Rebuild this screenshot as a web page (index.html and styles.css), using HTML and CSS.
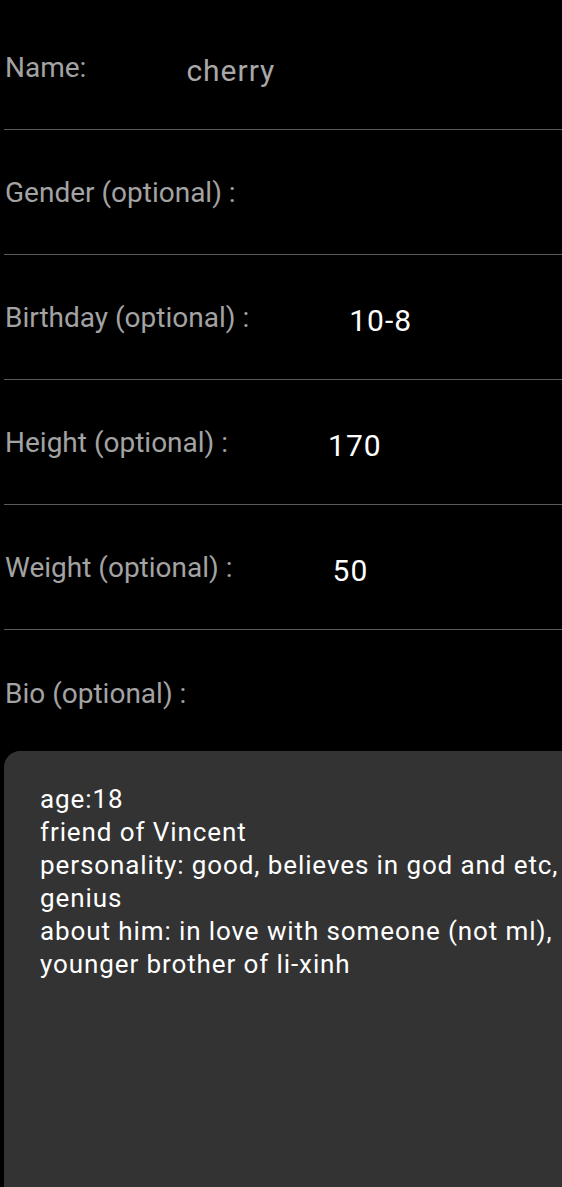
FILE: index.html
```html
<!DOCTYPE html>
<html>
<head>
<meta charset="utf-8">
<link rel="stylesheet" href="styles.css">
</head>
<body>
<div class="form">
  <div class="row"><span class="label">Name:</span><span class="value muted">cherry</span></div>
  <div class="row"><span class="label">Gender (optional) :</span></div>
  <div class="row"><span class="label">Birthday (optional) :</span><span class="value">10-8</span></div>
  <div class="row"><span class="label">Height (optional) :</span><span class="value">170</span></div>
  <div class="row"><span class="label">Weight (optional) :</span><span class="value">50</span></div>
  <div class="row bio-row"><span class="label">Bio (optional) :</span></div>
  <div class="bio">
    <p>age:18<br>friend of Vincent<br>personality: good, believes in god and etc, genius<br>about him: in love with someone (not ml), younger brother of li-xinh</p>
  </div>
</div>
</body>
</html>
```

FILE: styles.css
```css
html, body {
  margin: 0;
  padding: 0;
  background: #000;
  height: 100%;
  overflow: hidden;
}
body {
  font-family: Roboto, "Noto Sans", sans-serif;
}
.form {
  padding: 5px 0 0 4px;
  display: flex;
  flex-direction: column;
}
.row {
  box-sizing: border-box;
  height: 125px;
  border-bottom: 1px solid #5a5a5a;
  display: flex;
  align-items: center;
  padding-left: 1px;
  padding-top: 1px;
}
.bio-row {
  border-bottom: none;
  height: 121px;
  padding-top: 6px;
}
.label {
  color: #a3a3a3;
  font-size: 28px;
}
.value {
  color: #fff;
  font-size: 30px;
  letter-spacing: 1px;
  margin-left: 100px;
  padding-top: 5px;
}
.value.muted {
  color: #a8a8a8;
}
.bio {
  background: #333333;
  border-radius: 16px 0 0 0;
  height: 440px;
  padding: 32px 0 0 36px;
}
.bio p {
  margin: 0;
  color: #fff;
  font-size: 26px;
  letter-spacing: 0.9px;
  line-height: 33px;
  width: 524px;
}
```
